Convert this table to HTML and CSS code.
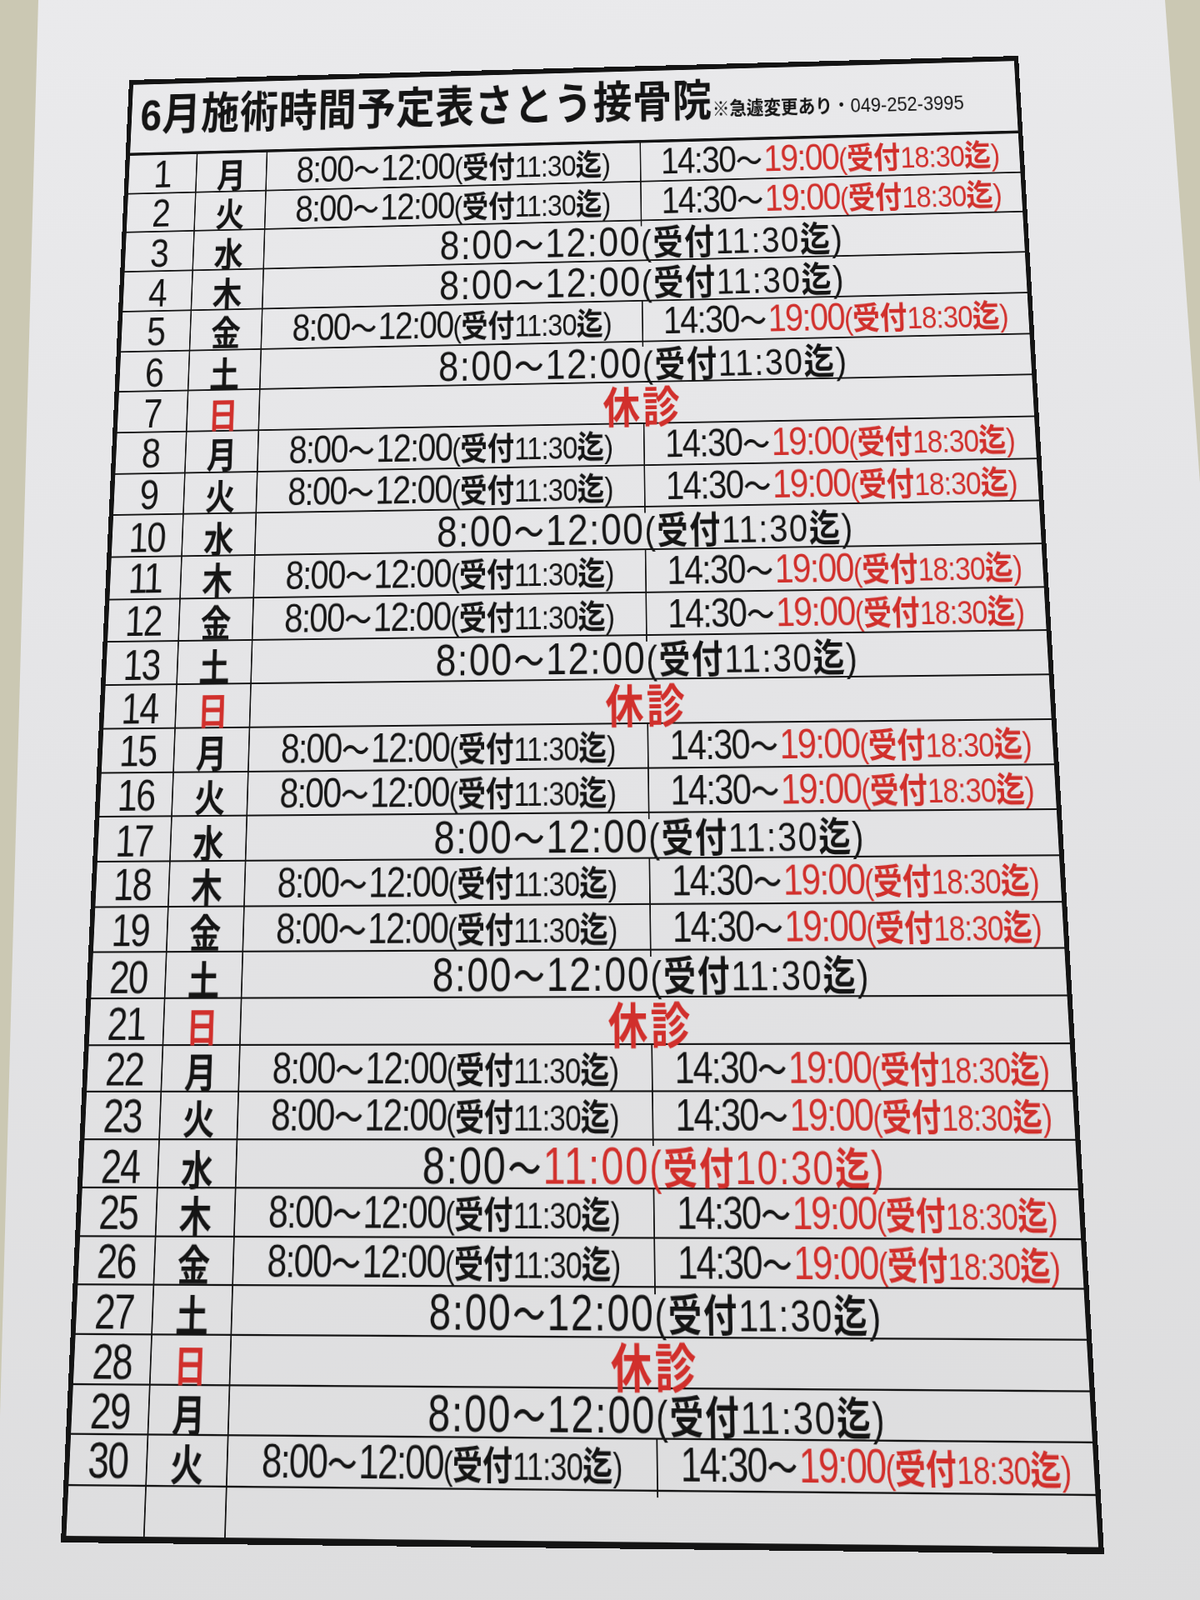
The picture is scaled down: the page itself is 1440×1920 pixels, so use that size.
FILE: index.html
```html
<!DOCTYPE html>
<html lang="ja">
<head>
<meta charset="utf-8">
<title>6月施術時間予定表 さとう接骨院</title>
<link rel="stylesheet" href="styles.css">
</head>
<body>
<div class="paper">
  <div class="sheet">
    <div class="head">
      <span class="title">6月施術時間予定表さとう接骨院</span><span class="note"><b>※急遽変更あり</b>・049-252-3995</span>
    </div>

    <div class="row"><div class="day">1</div><div class="wd">月</div>
      <div class="am"><span class="ln"><span class="tm">8:00<i class="wv">〜</i>12:00</span><span class="pr">(<b>受付</b>11:30<b>迄</b>)</span></span></div>
      <div class="pm"><span class="ln"><span class="tm">14:30<i class="wv">〜</i><em class="red">19:00</em></span><span class="pr red">(<b>受付</b>18:30<b>迄</b>)</span></span></div></div>
    <div class="row"><div class="day">2</div><div class="wd">火</div>
      <div class="am"><span class="ln"><span class="tm">8:00<i class="wv">〜</i>12:00</span><span class="pr">(<b>受付</b>11:30<b>迄</b>)</span></span></div>
      <div class="pm"><span class="ln"><span class="tm">14:30<i class="wv">〜</i><em class="red">19:00</em></span><span class="pr red">(<b>受付</b>18:30<b>迄</b>)</span></span></div></div>
    <div class="row"><div class="day">3</div><div class="wd">水</div>
      <div class="full"><span class="ln big"><span class="tm">8:00<i class="wv">〜</i>12:00</span><span class="pr">(<b>受付</b>11:30<b>迄</b>)</span></span></div></div>
    <div class="row"><div class="day">4</div><div class="wd">木</div>
      <div class="full"><span class="ln big"><span class="tm">8:00<i class="wv">〜</i>12:00</span><span class="pr">(<b>受付</b>11:30<b>迄</b>)</span></span></div></div>
    <div class="row"><div class="day">5</div><div class="wd">金</div>
      <div class="am"><span class="ln"><span class="tm">8:00<i class="wv">〜</i>12:00</span><span class="pr">(<b>受付</b>11:30<b>迄</b>)</span></span></div>
      <div class="pm"><span class="ln"><span class="tm">14:30<i class="wv">〜</i><em class="red">19:00</em></span><span class="pr red">(<b>受付</b>18:30<b>迄</b>)</span></span></div></div>
    <div class="row"><div class="day">6</div><div class="wd">土</div>
      <div class="full"><span class="ln big"><span class="tm">8:00<i class="wv">〜</i>12:00</span><span class="pr">(<b>受付</b>11:30<b>迄</b>)</span></span></div></div>
    <div class="row"><div class="day">7</div><div class="wd red">日</div>
      <div class="full"><span class="kyu">休診</span></div></div>
    <div class="row"><div class="day">8</div><div class="wd">月</div>
      <div class="am"><span class="ln"><span class="tm">8:00<i class="wv">〜</i>12:00</span><span class="pr">(<b>受付</b>11:30<b>迄</b>)</span></span></div>
      <div class="pm"><span class="ln"><span class="tm">14:30<i class="wv">〜</i><em class="red">19:00</em></span><span class="pr red">(<b>受付</b>18:30<b>迄</b>)</span></span></div></div>
    <div class="row"><div class="day">9</div><div class="wd">火</div>
      <div class="am"><span class="ln"><span class="tm">8:00<i class="wv">〜</i>12:00</span><span class="pr">(<b>受付</b>11:30<b>迄</b>)</span></span></div>
      <div class="pm"><span class="ln"><span class="tm">14:30<i class="wv">〜</i><em class="red">19:00</em></span><span class="pr red">(<b>受付</b>18:30<b>迄</b>)</span></span></div></div>
    <div class="row"><div class="day">10</div><div class="wd">水</div>
      <div class="full"><span class="ln big"><span class="tm">8:00<i class="wv">〜</i>12:00</span><span class="pr">(<b>受付</b>11:30<b>迄</b>)</span></span></div></div>
    <div class="row"><div class="day">11</div><div class="wd">木</div>
      <div class="am"><span class="ln"><span class="tm">8:00<i class="wv">〜</i>12:00</span><span class="pr">(<b>受付</b>11:30<b>迄</b>)</span></span></div>
      <div class="pm"><span class="ln"><span class="tm">14:30<i class="wv">〜</i><em class="red">19:00</em></span><span class="pr red">(<b>受付</b>18:30<b>迄</b>)</span></span></div></div>
    <div class="row"><div class="day">12</div><div class="wd">金</div>
      <div class="am"><span class="ln"><span class="tm">8:00<i class="wv">〜</i>12:00</span><span class="pr">(<b>受付</b>11:30<b>迄</b>)</span></span></div>
      <div class="pm"><span class="ln"><span class="tm">14:30<i class="wv">〜</i><em class="red">19:00</em></span><span class="pr red">(<b>受付</b>18:30<b>迄</b>)</span></span></div></div>
    <div class="row"><div class="day">13</div><div class="wd">土</div>
      <div class="full"><span class="ln big"><span class="tm">8:00<i class="wv">〜</i>12:00</span><span class="pr">(<b>受付</b>11:30<b>迄</b>)</span></span></div></div>
    <div class="row"><div class="day">14</div><div class="wd red">日</div>
      <div class="full"><span class="kyu">休診</span></div></div>
    <div class="row"><div class="day">15</div><div class="wd">月</div>
      <div class="am"><span class="ln"><span class="tm">8:00<i class="wv">〜</i>12:00</span><span class="pr">(<b>受付</b>11:30<b>迄</b>)</span></span></div>
      <div class="pm"><span class="ln"><span class="tm">14:30<i class="wv">〜</i><em class="red">19:00</em></span><span class="pr red">(<b>受付</b>18:30<b>迄</b>)</span></span></div></div>
    <div class="row"><div class="day">16</div><div class="wd">火</div>
      <div class="am"><span class="ln"><span class="tm">8:00<i class="wv">〜</i>12:00</span><span class="pr">(<b>受付</b>11:30<b>迄</b>)</span></span></div>
      <div class="pm"><span class="ln"><span class="tm">14:30<i class="wv">〜</i><em class="red">19:00</em></span><span class="pr red">(<b>受付</b>18:30<b>迄</b>)</span></span></div></div>
    <div class="row"><div class="day">17</div><div class="wd">水</div>
      <div class="full"><span class="ln big"><span class="tm">8:00<i class="wv">〜</i>12:00</span><span class="pr">(<b>受付</b>11:30<b>迄</b>)</span></span></div></div>
    <div class="row"><div class="day">18</div><div class="wd">木</div>
      <div class="am"><span class="ln"><span class="tm">8:00<i class="wv">〜</i>12:00</span><span class="pr">(<b>受付</b>11:30<b>迄</b>)</span></span></div>
      <div class="pm"><span class="ln"><span class="tm">14:30<i class="wv">〜</i><em class="red">19:00</em></span><span class="pr red">(<b>受付</b>18:30<b>迄</b>)</span></span></div></div>
    <div class="row"><div class="day">19</div><div class="wd">金</div>
      <div class="am"><span class="ln"><span class="tm">8:00<i class="wv">〜</i>12:00</span><span class="pr">(<b>受付</b>11:30<b>迄</b>)</span></span></div>
      <div class="pm"><span class="ln"><span class="tm">14:30<i class="wv">〜</i><em class="red">19:00</em></span><span class="pr red">(<b>受付</b>18:30<b>迄</b>)</span></span></div></div>
    <div class="row"><div class="day">20</div><div class="wd">土</div>
      <div class="full"><span class="ln big"><span class="tm">8:00<i class="wv">〜</i>12:00</span><span class="pr">(<b>受付</b>11:30<b>迄</b>)</span></span></div></div>
    <div class="row"><div class="day">21</div><div class="wd red">日</div>
      <div class="full"><span class="kyu">休診</span></div></div>
    <div class="row"><div class="day">22</div><div class="wd">月</div>
      <div class="am"><span class="ln"><span class="tm">8:00<i class="wv">〜</i>12:00</span><span class="pr">(<b>受付</b>11:30<b>迄</b>)</span></span></div>
      <div class="pm"><span class="ln"><span class="tm">14:30<i class="wv">〜</i><em class="red">19:00</em></span><span class="pr red">(<b>受付</b>18:30<b>迄</b>)</span></span></div></div>
    <div class="row"><div class="day">23</div><div class="wd">火</div>
      <div class="am"><span class="ln"><span class="tm">8:00<i class="wv">〜</i>12:00</span><span class="pr">(<b>受付</b>11:30<b>迄</b>)</span></span></div>
      <div class="pm"><span class="ln"><span class="tm">14:30<i class="wv">〜</i><em class="red">19:00</em></span><span class="pr red">(<b>受付</b>18:30<b>迄</b>)</span></span></div></div>
    <div class="row"><div class="day">24</div><div class="wd">水</div>
      <div class="full"><span class="ln big wide"><span class="tm">8:00<i class="wv">〜</i><em class="red">11:00</em></span><span class="pr red">(<b>受付</b>10:30<b>迄</b>)</span></span></div></div>
    <div class="row"><div class="day">25</div><div class="wd">木</div>
      <div class="am"><span class="ln"><span class="tm">8:00<i class="wv">〜</i>12:00</span><span class="pr">(<b>受付</b>11:30<b>迄</b>)</span></span></div>
      <div class="pm"><span class="ln"><span class="tm">14:30<i class="wv">〜</i><em class="red">19:00</em></span><span class="pr red">(<b>受付</b>18:30<b>迄</b>)</span></span></div></div>
    <div class="row"><div class="day">26</div><div class="wd">金</div>
      <div class="am"><span class="ln"><span class="tm">8:00<i class="wv">〜</i>12:00</span><span class="pr">(<b>受付</b>11:30<b>迄</b>)</span></span></div>
      <div class="pm"><span class="ln"><span class="tm">14:30<i class="wv">〜</i><em class="red">19:00</em></span><span class="pr red">(<b>受付</b>18:30<b>迄</b>)</span></span></div></div>
    <div class="row"><div class="day">27</div><div class="wd">土</div>
      <div class="full"><span class="ln big"><span class="tm">8:00<i class="wv">〜</i>12:00</span><span class="pr">(<b>受付</b>11:30<b>迄</b>)</span></span></div></div>
    <div class="row"><div class="day">28</div><div class="wd red">日</div>
      <div class="full"><span class="kyu">休診</span></div></div>
    <div class="row"><div class="day">29</div><div class="wd">月</div>
      <div class="full"><span class="ln big"><span class="tm">8:00<i class="wv">〜</i>12:00</span><span class="pr">(<b>受付</b>11:30<b>迄</b>)</span></span></div></div>
    <div class="row"><div class="day">30</div><div class="wd">火</div>
      <div class="am"><span class="ln"><span class="tm">8:00<i class="wv">〜</i>12:00</span><span class="pr">(<b>受付</b>11:30<b>迄</b>)</span></span></div>
      <div class="pm"><span class="ln"><span class="tm">14:30<i class="wv">〜</i><em class="red">19:00</em></span><span class="pr red">(<b>受付</b>18:30<b>迄</b>)</span></span></div></div>
    <div class="row"><div class="day"></div><div class="wd"></div><div class="full"></div></div>
  </div>
</div>
</body>
</html>
```

FILE: styles.css
```css
* { box-sizing: border-box; }

html, body {
  margin: 0;
  padding: 0;
}

body {
  width: 1440px;
  height: 1920px;
  overflow: hidden;
  background: #cbc8b3;
  color: #151515;
  font-family: "Liberation Sans", "Noto Sans CJK JP", sans-serif;
}

.paper {
  width: 1440px;
  height: 1920px;
  padding: 96px 0 0 155px;
  overflow: hidden;
  background: linear-gradient(172deg, #eaeaec 0%, #e4e4e6 45%, #dcdcdd 100%);
  clip-path: polygon(46px 0, 1398px 0, 1440px 580px, 1440px 1920px, 0 1920px, 0 1700px);
}

.sheet {
  width: 1400px;
  height: 1777px;
  border: 7px solid #141414;
  display: flex;
  flex-direction: column;
  transform-origin: 0 0;
  transform: matrix3d(0.744781, -0.020242, 0, -0.000016271,
                      -0.039413, 0.843536, 0, -0.000082099,
                      0, 0, 1, 0,
                      0, 0, 0, 1);
}

.head {
  flex: none;
  height: 100px;
  border-bottom: 4px solid #141414;
  display: flex;
  align-items: baseline;
  padding: 14px 0 0 14px;
  white-space: nowrap;
}

.title {
  font-size: 61px;
  font-weight: 700;
  letter-spacing: 1px;
  line-height: 1;
}

.note {
  font-size: 28px;
  line-height: 1;
  margin-left: 0;
}

.note b {
  font-weight: 700;
  font-size: 0.95em;
}

.row {
  flex: 1 1 0;
  display: grid;
  grid-template-columns: 106px 111px 586px 1fr;
  border-bottom: 2.5px solid #141414;
  min-height: 0;
}

.row:last-child { border-bottom: none; }

.row > div {
  display: flex;
  align-items: center;
  justify-content: center;
  white-space: nowrap;
  border-left: 2.5px solid #141414;
  min-width: 0;
  padding-bottom: 8px;
}

.row > div:first-child { border-left: none; }

.full { grid-column: 3 / 5; }

.row > .day {
  font-size: 53px;
  letter-spacing: -2px;
  line-height: 1;
  padding-bottom: 7px;
}

.row > .wd {
  font-family: "Noto Sans CJK JP", sans-serif;
  font-size: 46px;
  font-weight: 700;
  line-height: 1;
  padding-bottom: 6px;
}

.ln {
  display: block;
  line-height: 1;
}

.tm {
  font-family: "Liberation Sans Narrow", "Arial Narrow", "Liberation Sans", sans-serif;
  font-size: 50px;
  letter-spacing: -2px;
}

.wv {
  font-style: normal;
  font-family: "Noto Sans CJK JP", sans-serif;
  font-weight: 500;
  font-size: 0.82em;
  letter-spacing: 0;
  margin: 0 0.05em 0 0.02em;
}

em { font-style: normal; }

.pr {
  font-family: "Liberation Sans", sans-serif;
  font-size: 41px;
  letter-spacing: -1px;
}

.pr b {
  font-family: "Noto Sans CJK JP", sans-serif;
  font-weight: 700;
  font-size: 1em;
  letter-spacing: 0;
}

.big .tm {
  font-family: "Liberation Sans", sans-serif;
  font-size: 55px;
  letter-spacing: 2px;
}

.big .pr {
  font-size: 49px;
  letter-spacing: 2px;
}

.big .pr b {
  font-size: 0.94em;
  letter-spacing: 2px;
}

.big.wide .tm { font-size: 57px; }
.big.wide .pr { font-size: 51px; }

.kyu {
  font-family: "Noto Sans CJK JP", sans-serif;
  font-size: 56px;
  font-weight: 700;
  letter-spacing: 4px;
  line-height: 1;
  color: #d1302c;
}

.red { color: #d1302c; }
```
